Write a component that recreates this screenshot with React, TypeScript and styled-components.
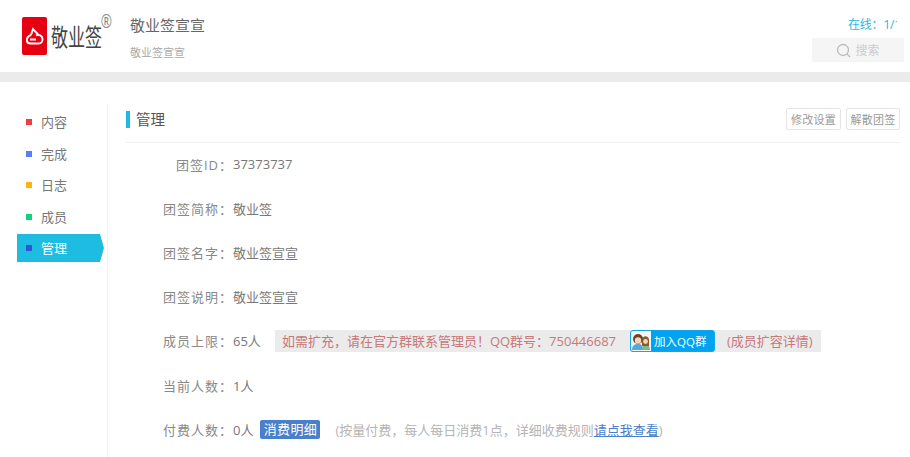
import styled, { createGlobalStyle } from 'styled-components'

const Global = createGlobalStyle`
  html, body {
    margin: 0;
    height: 457px;
    overflow: hidden;
    background: #fff;
    font-family: "Open Sans", "Noto Sans CJK SC", sans-serif;
    color: #666;
  }
  * { box-sizing: border-box; }
`

const Header = styled.header`
  height: 72px;
  display: flex;
  padding: 0 6px 0 22px;
`

const Logo = styled.div`
  width: 108px;
  display: flex;
  align-items: flex-start;
  padding-top: 17px;
`

const LogoMark = styled.div`
  width: 25px;
  height: 38px;
  background: #e60012;
  border-radius: 2px;
  display: flex;
  align-items: center;
  justify-content: center;
`

const LogoText = styled.div`
  position: relative;
  margin-left: 4px;
  margin-top: 4px;
  font-size: 24px;
  line-height: 32px;
  color: #444;
  white-space: nowrap;
  transform: scaleX(0.71);
  transform-origin: left top;
`

const Registered = styled.span`
  position: absolute;
  top: -10px;
  left: 70px;
  font-size: 19px;
  line-height: 20px;
  color: #888;
`

const Team = styled.div`
  flex: 1;
  padding-top: 15px;
`

const TeamName = styled.div`
  font-size: 15px;
  line-height: 20px;
  color: #666;
`

const TeamNote = styled.div`
  margin-top: 9px;
  font-size: 11px;
  line-height: 18px;
  color: #aaa;
`

const HeaderRight = styled.div`
  width: 92px;
  display: flex;
  flex-direction: column;
  align-items: flex-end;
  padding-top: 16px;
`

const Online = styled.div`
  width: 49px;
  margin-right: 7px;
  overflow: hidden;
  white-space: nowrap;
  padding-top: 1px;
  height: 16px;
  font-size: 12px;
  line-height: 16px;
  letter-spacing: -0.2px;
  color: #1fb8e0;
`

const SearchBox = styled.div`
  margin-top: 6px;
  width: 92px;
  height: 24px;
  background: #f5f5f5;
  display: flex;
  align-items: center;
  justify-content: center;
  gap: 4px;
  font-size: 12px;
  color: #ccc;
`

const Band = styled.div`
  height: 10px;
  background: #ebebeb;
`

const Body = styled.div`
  display: flex;
  padding: 22px 10px 0 17px;
`

const Sidebar = styled.nav`
  width: 91px;
  height: 353px;
  padding-top: 4px;
  border-right: 1px solid #f0f0f0;
  display: flex;
  flex-direction: column;
  gap: 3.5px;
`

const NavItem = styled.div<{ $active?: boolean }>`
  position: relative;
  width: 83px;
  height: 28px;
  display: flex;
  align-items: center;
  padding-left: 9px;
  gap: 9px;
  font-size: 13px;
  line-height: 26px;
  background: ${(p) => (p.$active ? '#1fbce2' : 'transparent')};
  color: ${(p) => (p.$active ? '#fff' : '#777')};
  ${(p) =>
    p.$active &&
    `&::after {
      content: '';
      position: absolute;
      left: 100%;
      top: 0;
      border-left: 4px solid #1fbce2;
      border-top: 14px solid transparent;
      border-bottom: 14px solid transparent;
    }`}
`

const Dot = styled.i<{ $color: string }>`
  width: 6px;
  height: 6px;
  background: ${(p) => p.$color};
`

const Main = styled.main`
  flex: 1;
  padding-left: 18px;
`

const TitleBar = styled.div`
  height: 39px;
  display: flex;
  align-items: flex-start;
  border-bottom: 1px solid #f0f0f0;
  padding-top: 7px;
`

const Title = styled.h2`
  flex: 1;
  margin: 0;
  padding-left: 6px;
  border-left: 4px solid #1fbce2;
  font-size: 14.5px;
  font-weight: 400;
  line-height: 17px;
  color: #555;
`

const TitleButton = styled.button`
  height: 22px;
  width: 55px;
  margin-left: 5px;
  padding: 0;
  margin-top: -3px;
  border: 1px solid #e5e5e5;
  border-radius: 2px;
  background: #fff;
  font: inherit;
  font-size: 11px;
  letter-spacing: 0.3px;
  color: #999;
  &:last-child {
    width: 54px;
  }
`

const RowList = styled.div`
  margin-top: -1px;
`

const Row = styled.div`
  height: 44.2px;
  display: flex;
  align-items: center;
  font-size: 13px;
  color: #777;
`

const Label = styled.span`
  width: 107px;
  text-align: right;
  letter-spacing: 1px;
  color: #888;
`

const Value = styled.span`
  color: #777;
`

const Notice = styled.div`
  margin-left: 14px;
  height: 22px;
  display: flex;
  align-items: center;
  padding: 0 8px 0 7px;
  background: #ebebeb;
  color: #c87878;
  white-space: nowrap;
`

const QQButton = styled.span`
  margin: 0 12px 0 14px;
  width: 85px;
  height: 22px;
  display: flex;
  align-items: center;
  gap: 3px;
  border: 1px solid #12a5ea;
  border-radius: 3px;
  background: #00a3f0;
  color: #fff;
  font-size: 11.5px;
  overflow: hidden;
`

const Avatar = styled.span`
  width: 20px;
  height: 20px;
  background: #f6f6f6;
  display: flex;
`

const DetailTag = styled.span`
  margin-left: 7px;
  width: 60px;
  height: 19px;
  line-height: 18px;
  text-align: center;
  border-radius: 2px;
  background: #4a7fcb;
  color: #fff;
  font-size: 13px;
  letter-spacing: 0.4px;
`

const Hint = styled.span`
  margin-left: 15px;
  color: #b5b5b5;
  white-space: nowrap;
`

const HintLink = styled.a`
  color: #4a7fcb;
  text-decoration: underline;
`

const rows = [
  { label: '团签简称：', value: '敬业签' },
  { label: '团签名字：', value: '敬业签宣宣' },
  { label: '团签说明：', value: '敬业签宣宣' },
]

const navItems = [
  { text: '内容', color: '#ef3e42' },
  { text: '完成', color: '#5b7ff5' },
  { text: '日志', color: '#ffb30f' },
  { text: '成员', color: '#0fd47f' },
  { text: '管理', color: '#2f55d4', active: true },
]

export default function App() {
  return (
    <>
      <Global />
      <Header>
        <Logo>
          <LogoMark>
            <svg width="19" height="18" viewBox="0 0 19 18" fill="none" stroke="#fff" strokeWidth="1.9">
              <path d="M6 8 L8 2 L14 8.5 M6 8 C3 9 1.5 11 2 14 C2.3 16 4 16.5 5.5 16.5 L13.5 16.5 C16.5 16.5 18 14 17.5 11.5 C17 8.5 14 7 11 8.5 M5 12.5 H11" />
            </svg>
          </LogoMark>
          <LogoText>
            敬业签<Registered>®</Registered>
          </LogoText>
        </Logo>
        <Team>
          <TeamName>敬业签宣宣</TeamName>
          <TeamNote>敬业签宣宣</TeamNote>
        </Team>
        <HeaderRight>
          <Online>在线：1/1</Online>
          <SearchBox>
            <svg width="15" height="15" viewBox="0 0 15 15" fill="none" stroke="#bbb" strokeWidth="1.3">
              <circle cx="7" cy="7" r="5.5" />
              <path d="M11 11 L14 14" />
            </svg>
            搜索
          </SearchBox>
        </HeaderRight>
      </Header>
      <Band />
      <Body>
        <Sidebar>
          {navItems.map((n) => (
            <NavItem key={n.text} $active={n.active}>
              <Dot $color={n.color} />
              {n.text}
            </NavItem>
          ))}
        </Sidebar>
        <Main>
          <TitleBar>
            <Title>管理</Title>
            <TitleButton>修改设置</TitleButton>
            <TitleButton>解散团签</TitleButton>
          </TitleBar>
          <RowList>
            <Row>
              <Label>团签ID：</Label>
              <Value>37373737</Value>
            </Row>
            {rows.map((r) => (
              <Row key={r.label}>
                <Label>{r.label}</Label>
                <Value>{r.value}</Value>
              </Row>
            ))}
            <Row>
              <Label>成员上限：</Label>
              <Value>65人</Value>
              <Notice>
                如需扩充，请在官方群联系管理员！QQ群号：750446687
                <QQButton>
                  <Avatar>
                    <svg width="20" height="20" viewBox="0 0 20 20">
                      <path d="M1 19 C1 14 4 13 7 13 C10 13 12 14 12 19 Z" fill="#5aa6d8" />
                      <path d="M11 19 C11 15 13 14 15 14 C17 14 19 15 19 19 Z" fill="#7fb98a" />
                      <path d="M11 9 C11 4 18 4 18 9 L18 15 L11 15 Z" fill="#8a5a32" />
                      <circle cx="7" cy="8" r="5" fill="#6e4426" />
                      <circle cx="7" cy="9.5" r="3.2" fill="#f5d3b5" />
                      <circle cx="14.5" cy="10.5" r="2.4" fill="#f5d3b5" />
                    </svg>
                  </Avatar>
                  加入QQ群
                </QQButton>
                (成员扩容详情)
              </Notice>
            </Row>
            <Row>
              <Label>当前人数：</Label>
              <Value>1人</Value>
            </Row>
            <Row>
              <Label>付费人数：</Label>
              <Value>0人</Value>
              <DetailTag>消费明细</DetailTag>
              <Hint>
                (按量付费，每人每日消费1点，详细收费规则<HintLink>请点我查看</HintLink>)
              </Hint>
            </Row>
          </RowList>
        </Main>
      </Body>
    </>
  )
}
